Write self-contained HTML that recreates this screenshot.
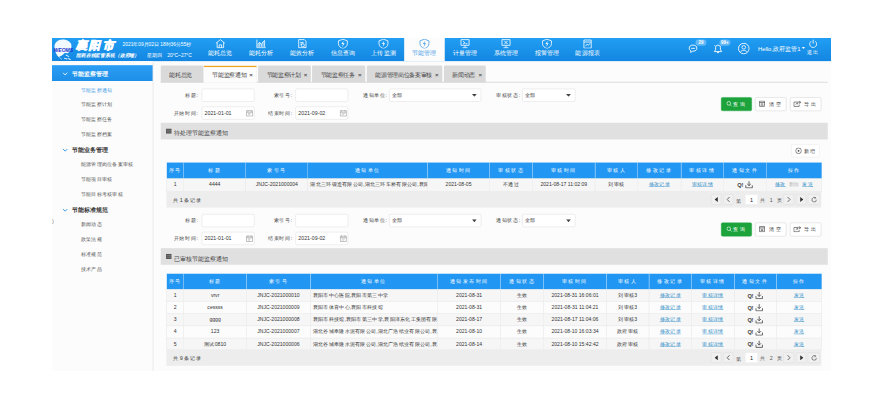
<!DOCTYPE html>
<html><head><meta charset="utf-8"><title>节能监察通知</title>
<style>
@font-face{font-family:"Liberation Sans CJK";src:local("Liberation Sans"),local("LiberationSans");unicode-range:U+3000-9FFF,U+FF00-FFEF;size-adjust:130%}
*{box-sizing:border-box;margin:0;padding:0}
html,body{width:872px;height:412px;overflow:hidden;background:#fff}
body{position:relative;font-family:"Liberation Sans CJK","Liberation Sans",sans-serif;color:#333}
#pg{position:absolute;left:52px;top:38px;width:1920px;height:821px;transform:scale(0.40573);transform-origin:0 0;background:#fcfcfc;overflow:hidden}
.a{position:absolute}
#hd{position:absolute;left:0;top:0;width:1920px;height:57px;background:linear-gradient(#219ef3,#1386e1);color:#fff}
.nav{position:absolute;top:0;height:57px;text-align:center;color:#fff;font-size:14px}
.nav svg{position:absolute;left:50%;margin-left:-16px;top:2px;width:32px;height:24px}
.nav span{position:absolute;left:0;right:0;top:27px;line-height:18px;letter-spacing:1px}
.nav.on{background:#fcfcfc;color:#4aa0e6}
#sb{position:absolute;left:0;top:57px;width:250px;height:764px;background:#fcfcfc;border-right:2px solid #e8e8e8}
.sbh{position:absolute;left:0;width:248px;height:39px;line-height:43px;font-size:15px;font-weight:bold;color:#333}
.sbh.on{background:linear-gradient(#2a9df4,#1e8fe8);color:#fff}
.sbh i{position:absolute;left:26px;top:0;font-style:normal;font-weight:normal;color:#2a96ee}
.sbh.on i{color:#fff}
.sbh b{position:absolute;left:49px}
.sbi{position:absolute;left:71px;font-size:13px;line-height:20px;color:#555}
.tab{position:absolute;top:68px;height:41px;background:#dadada;font-size:14px;line-height:45px;color:#444;text-align:left;padding-left:21px;border-radius:3px 3px 0 0}
.tab.on{background:#fcfcfc;border-top:4px solid #eea31c;line-height:37px;border-right:1px solid #e2e2e2}
.tab em{font-style:normal;position:absolute;right:9px;font-size:15px;color:#555;font-weight:bold}
.lbl{position:absolute;font-size:13.5px;color:#444;text-align:right;line-height:32px;height:32px}
.inp{position:absolute;height:32px;border:1px solid #d6d6d6;border-radius:4px;background:#fff;font-size:13px;line-height:30px;padding-left:6px;color:#333}
.btn{position:absolute;height:34px;border-radius:4px;font-size:13px;line-height:32px;text-align:center;border:1px solid #c9c9c9;background:#fff;color:#333;letter-spacing:4px}
.btn.g{background:#1ca33c;border-color:#1ca33c;color:#fff}
.sec{position:absolute;left:0;width:1644px;height:41px;background:#e0e0e0;font-size:15px;line-height:41px;color:#444;padding-left:13px}
table{position:absolute;border-collapse:collapse;table-layout:fixed;font-size:12.5px;color:#333}
th{background:#2196f3;color:#fff;font-weight:normal;font-size:13.5px;border-left:1px solid #cfe5fa;letter-spacing:2px;padding-top:2px}
td{border:1px solid #dedede;text-align:center;white-space:nowrap;overflow:hidden}
tr.s td{background:#f6f6f6}
td.l{text-align:left;padding-left:6px}
a{color:#3590c8;text-decoration:underline}
.pgbar{position:absolute;left:14px;width:1614px;height:41px;background:#ededed;font-size:13px;line-height:40px;color:#333}
.pb{position:absolute;top:9px;height:26px;border:1px solid #dadada;background:#f0f0f0;border-radius:2px}
</style></head><body>
<div id="pg">
<div id="hd">
<svg class="a" style="left:0px;top:0px;width:56px;height:56px" viewBox="0 0 56 56"><path d="M6 22 C6 12 14 4 26 4 C38 4 48 10 48 20 C48 28 44 34 38 38 C34 36 30 37 28 40 C24 44 20 46 16 46 C12 42 8 36 8 30 Z" fill="#fff" opacity=".95"/><path d="M14 40 C16 46 20 50 24 52" stroke="#fff" stroke-width="2" fill="none" opacity=".7"/><path d="M34 42 L42 46 M30 50 L38 52 M40 50 L46 54" stroke="#fff" stroke-width="2.5" fill="none" opacity=".85"/><text x="28" y="34" text-anchor="middle" font-size="12" font-weight="bold" font-style="italic" textLength="48" lengthAdjust="spacingAndGlyphs" fill="#2233cc" font-family="Liberation Sans">WEOMS</text></svg>
<div class="a" style="left:59px;top:0px;font-size:27px;font-weight:bold;font-style:italic;letter-spacing:6px;line-height:36px;-webkit-text-stroke:2.5px #fff;color:#fff">襄阳市</div>
<div class="a" style="left:174px;top:8px;font-size:12px;line-height:16px;color:#fff">2021年09月02日 18时36分55秒</div>
<div class="a" style="left:59px;top:34px;font-size:12px;line-height:16px;font-style:italic;font-weight:bold;color:#fff">能耗在线监管系统（政府端）</div>
<div class="a" style="left:235px;top:34px;font-size:12px;line-height:16px;color:#fff">星期四</div>
<div class="a" style="left:284px;top:34px;font-size:12px;line-height:16px;color:#fff">20°C~27°C</div>
  <div class="nav" style="left:364.5px;width:100.6px"><svg viewBox="0 0 32 24"><path d="M5 11 L16 2 L27 11 M8 9 V22 H24 V9 M13 22 V15 H19 V22" fill="none" stroke="currentColor" stroke-width="2"/></svg><span>能耗总览</span></div>
  <div class="nav" style="left:465.1px;width:100.6px"><svg viewBox="0 0 32 24"><path d="M6 2 V22 H28 M9 20 V12 M13 20 V9 M17 20 V14 M21 20 V8 M25 20 V4 M9 12 L13 9 L17 14 L21 8 L25 4" fill="none" stroke="currentColor" stroke-width="2"/></svg><span>能耗分析</span></div>
  <div class="nav" style="left:565.7px;width:100.6px"><svg viewBox="0 0 32 24"><path d="M8 2 H22 L26 6 V22 H8 Z M12 9 H20 M12 13 H17" fill="none" stroke="currentColor" stroke-width="2"/><circle cx="18" cy="16" r="4" fill="none" stroke="currentColor" stroke-width="2"/><path d="M21 19 L25 23" stroke="currentColor" stroke-width="2"/></svg><span>能效分析</span></div>
  <div class="nav" style="left:666.3px;width:100.6px"><svg viewBox="0 0 32 24"><path d="M16 1 L27 5 V12 C27 18 22 22 16 24 C10 22 5 18 5 12 V5 Z" fill="none" stroke="currentColor" stroke-width="2"/><path d="M18 5 L12 13 H16 L14 20 L20 11 H16 Z" fill="currentColor"/></svg><span>信息查询</span></div>
  <div class="nav" style="left:766.9px;width:100.6px"><svg viewBox="0 0 32 24"><path d="M16 1 L27 5 V12 C27 18 22 22 16 24 C10 22 5 18 5 12 V5 Z" fill="none" stroke="currentColor" stroke-width="2"/><path d="M18 5 L12 13 H16 L14 20 L20 11 H16 Z" fill="currentColor"/></svg><span>上传监测</span></div>
  <div class="nav on" style="left:867.5px;width:100.6px"><svg viewBox="0 0 32 24"><path d="M16 1 L27 5 V12 C27 18 22 22 16 24 C10 22 5 18 5 12 V5 Z" fill="none" stroke="currentColor" stroke-width="2"/><path d="M18 5 L12 13 H16 L14 20 L20 11 H16 Z" fill="currentColor"/></svg><span>节能管理</span></div>
  <div class="nav" style="left:968.1px;width:100.6px"><svg viewBox="0 0 32 24"><path d="M6 2 H26 V16 H6 Z M16 16 V21 M10 22 H22 M11 6 L16 10 L11 13 M17 12 H22" fill="none" stroke="currentColor" stroke-width="2"/></svg><span>计量管理</span></div>
  <div class="nav" style="left:1068.7px;width:100.6px"><svg viewBox="0 0 32 24"><path d="M6 2 H26 V16 H6 Z M16 16 V21 M10 22 H22 M12 5 L20 13 M20 5 L12 13" fill="none" stroke="currentColor" stroke-width="2"/></svg><span>系统管理</span></div>
  <div class="nav" style="left:1169.3px;width:100.6px"><svg viewBox="0 0 32 24"><path d="M16 1 L27 5 V12 C27 18 22 22 16 24 C10 22 5 18 5 12 V5 Z" fill="none" stroke="currentColor" stroke-width="2"/><path d="M18 5 L12 13 H16 L14 20 L20 11 H16 Z" fill="currentColor"/></svg><span>报警管理</span></div>
  <div class="nav" style="left:1269.9px;width:100.6px"><svg viewBox="0 0 32 24"><path d="M7 3 H25 V23 H7 Z M7 8 H25 M11 18 L15 13 L18 16 L22 11" fill="none" stroke="currentColor" stroke-width="2"/></svg><span>能源报表</span></div>
<svg class="a" style="left:1568px;top:12px;width:28px;height:28px" viewBox="0 0 28 28"><path d="M12 5.5 C18 5.5 21.5 8.5 21.5 13 C21.5 17.5 18 20.5 12 20.5 L10 20.5 L6.5 24 L6.5 19.5 C3.5 18.5 2.5 16 2.5 13 C2.5 8.5 6 5.5 12 5.5 Z" fill="none" stroke="#fff" stroke-width="2.2"/><path d="M7 13.5 H17" stroke="#fff" stroke-width="2"/></svg>
<div class="a" style="left:1586px;top:4px;width:27px;height:15px;border-radius:8px;background:#62b8f6;color:#fff;font-size:11px;font-weight:bold;line-height:15px;text-align:center">29</div>
<svg class="a" style="left:1630px;top:12px;width:26px;height:28px" viewBox="0 0 26 28"><path d="M2.5 21.5 H20.5 L17.5 17 V11.5 C17.5 8 15 5.5 11.5 5.5 C8 5.5 5.5 8 5.5 11.5 V17 Z" fill="none" stroke="#fff" stroke-width="2.2"/><path d="M9 24 H14" stroke="#fff" stroke-width="2.2"/><path d="M3 6 L6 9 M20 6 L17 9" stroke="#fff" stroke-width="2"/></svg>
<div class="a" style="left:1645px;top:4px;width:27px;height:15px;border-radius:8px;background:#62b8f6;color:#fff;font-size:11px;font-weight:bold;line-height:15px;text-align:center">99+</div>
<svg class="a" style="left:1690px;top:11px;width:30px;height:30px" viewBox="0 0 30 30"><circle cx="15" cy="15" r="13" fill="none" stroke="#fff" stroke-width="2.2"/><circle cx="15" cy="12" r="4.5" fill="none" stroke="#fff" stroke-width="2"/><path d="M7 24 C9 18 21 18 23 24" fill="none" stroke="#fff" stroke-width="2"/></svg>
<div class="a" style="left:1740px;top:16px;font-size:14.5px;line-height:20px;color:#fff">Hello,政府监管1</div>
<svg class="a" style="left:1848px;top:22px;width:8px;height:6px" viewBox="0 0 8 6"><path d="M0 0 H8 L4 5 Z" fill="#fff"/></svg>
<svg class="a" style="left:1864px;top:3px;width:24px;height:22px" viewBox="0 0 24 22"><path d="M7 5 A8.5 8.5 0 1 0 17 5" fill="none" stroke="#fff" stroke-width="2"/><path d="M12 1 V11" stroke="#fff" stroke-width="2"/></svg>
<div class="a" style="left:1860px;top:28px;font-size:13px;line-height:16px;color:#fff;letter-spacing:3px">退出</div>
</div>
<div id="sb">
<div class="sbh on" style="top:10px"><i><svg style="width:13px;height:9px;vertical-align:1px" viewBox="0 0 13 9"><path d="M1 1.5 L6.5 7 L12 1.5" fill="none" stroke="currentColor" stroke-width="2.2"/></svg></i><b>节能监察管理</b></div>
<div class="sbi" style="top:60.5px; color:#4aa0e6;">节能监察通知</div>
<div class="sbi" style="top:97.3px;">节能监察计划</div>
<div class="sbi" style="top:134.2px;">节能监察任务</div>
<div class="sbi" style="top:171.1px;">节能监察档案</div>
<div class="sbh" style="top:198.4px"><i><svg style="width:13px;height:9px;vertical-align:1px" viewBox="0 0 13 9"><path d="M1 1.5 L6.5 7 L12 1.5" fill="none" stroke="currentColor" stroke-width="2.2"/></svg></i><b>节能业务管理</b></div>
<div class="sbi" style="top:244.8px;">能源管理岗位备案审核</div>
<div class="sbi" style="top:281.6px;">节能项目审核</div>
<div class="sbi" style="top:318.4px;">节能目标考核审核</div>
<div class="sbh" style="top:345.8px"><i><svg style="width:13px;height:9px;vertical-align:1px" viewBox="0 0 13 9"><path d="M1 1.5 L6.5 7 L12 1.5" fill="none" stroke="currentColor" stroke-width="2.2"/></svg></i><b>节能标准规范</b></div>
<div class="sbi" style="top:392.2px;">新闻动态</div>
<div class="sbi" style="top:429.0px;">政策法规</div>
<div class="sbi" style="top:465.9px;">标准规范</div>
<div class="sbi" style="top:502.7px;">技术产品</div>
<div class="a" style="left:0;top:383px;font-size:14px;line-height:20px;color:#888">)</div>
</div>
<div class="a" style="left:268px;top:0;width:1652px;height:821px">
<div class="tab" style="left:0px;width:106px">能耗总览</div>
<div class="tab on" style="left:106px;width:131px">节能监察通知<em>×</em></div>
<div class="tab" style="left:240px;width:130px">节能监察计划<em>×</em></div>
<div class="tab" style="left:373px;width:131px">节能监察任务<em>×</em></div>
<div class="tab" style="left:508px;width:186px">能源管理岗位备案审核<em>×</em></div>
<div class="tab" style="left:698px;width:103px">新闻动态<em>×</em></div>
<div class="a" style="left:0;top:108px;width:1644px;height:2px;background:#d4d4d4"></div>
<div class="tab on" style="left:106px;width:131px;height:42px">节能监察通知<em>×</em></div>
<div class="lbl" style="left:0;width:92px;top:125px">标题:</div>
<div class="inp" style="left:101px;width:130px;top:125px"></div>
<div class="lbl" style="left:200px;width:124px;top:125px">索引号:</div>
<div class="inp" style="left:332px;width:130px;top:125px"></div>
<div class="lbl" style="left:450px;width:108px;top:125px">通知单位:</div>
<div class="inp" style="left:563px;width:227px;top:125px">全部<svg class="a" style="right:10px;top:12px;width:12px;height:7px" viewBox="0 0 12 7"><path d="M0 0 H12 L6 7 Z" fill="#444"/></svg></div>
<div class="lbl" style="left:780px;width:106px;top:125px">审核状态:</div>
<div class="inp" style="left:891px;width:131px;top:125px">全部<svg class="a" style="right:10px;top:12px;width:12px;height:7px" viewBox="0 0 12 7"><path d="M0 0 H12 L6 7 Z" fill="#444"/></svg></div>
<div class="lbl" style="left:0;width:92px;top:169px">开始时间:</div>
<div class="inp" style="left:101px;width:130px;top:169px">2021-01-01<svg class="a" style="right:2px;top:6px;width:18px;height:18px" viewBox="0 0 18 18"><path d="M1.5 3.5 H16.5 V16.5 H1.5 Z M1.5 7 H16.5 M5 1 V4.5 M13 1 V4.5 M5 10 H7 M8 10 H10 M11 10 H13 M5 13 H7 M8 13 H10" fill="none" stroke="#888" stroke-width="1.3"/></svg></div>
<div class="lbl" style="left:200px;width:124px;top:169px">结束时间:</div>
<div class="inp" style="left:332px;width:130px;top:169px">2021-09-02<svg class="a" style="right:2px;top:6px;width:18px;height:18px" viewBox="0 0 18 18"><path d="M1.5 3.5 H16.5 V16.5 H1.5 Z M1.5 7 H16.5 M5 1 V4.5 M13 1 V4.5 M5 10 H7 M8 10 H10 M11 10 H13 M5 13 H7 M8 13 H10" fill="none" stroke="#888" stroke-width="1.3"/></svg></div>
<div class="btn g" style="left:1381px;width:76px;top:146px"><svg style="width:14px;height:14px;vertical-align:-2px;margin-right:3px" viewBox="0 0 14 14"><circle cx="6" cy="6" r="4.5" fill="none" stroke="#fff" stroke-width="1.6"/><path d="M9.5 9.5 L13 13" stroke="#fff" stroke-width="1.6"/></svg>查询</div>
<div class="btn" style="left:1465px;width:77px;top:146px"><svg style="width:16px;height:16px;vertical-align:-3px;margin-right:9px" viewBox="0 0 16 16"><path d="M2 1.5 H14 V14.5 H2 Z M2 5 H14 M5 8.5 H11 M5 11.5 H11" fill="none" stroke="#444" stroke-width="1.6"/></svg>清空</div>
<div class="btn" style="left:1551px;width:77px;top:146px"><svg style="width:20px;height:16px;vertical-align:-3px;margin-right:7px" viewBox="0 0 20 16"><path d="M12 4 H1.5 V14.5 H14.5 V10 M6 9.5 L13 4.5 M9 8 H12 M15 2 L19 4.5 L15 7 Z" fill="none" stroke="#444" stroke-width="1.6"/></svg>导出</div>
<div class="sec" style="top:209px"><svg style="width:14px;height:13px;vertical-align:-1px;margin-right:5px" viewBox="0 0 14 13"><path d="M0 0 H14 V13 H0 Z" fill="#555"/><path d="M1.5 4.5 H12.5 M1.5 8.5 H12.5" stroke="#aaa" stroke-width="1"/></svg><span style="position:relative;top:5px">待处理节能监察通知</span></div>
<div class="btn" style="left:1554px;width:70px;top:262px;height:32px;line-height:31px;letter-spacing:1px;border-color:#e6e6e6"><svg style="width:16px;height:16px;vertical-align:-3px;margin-right:6px" viewBox="0 0 16 16"><circle cx="8" cy="8" r="7" fill="none" stroke="#444" stroke-width="1.6"/><circle cx="8" cy="8" r="2.2" fill="#444"/></svg>新增</div>
<table style="left:14px;top:307px;width:1614px">
<colgroup><col style="width:42px"><col style="width:153px"><col style="width:153px"><col style="width:295px"><col style="width:153px"><col style="width:106px"><col style="width:154px"><col style="width:105px"><col style="width:107px"><col style="width:105px"><col style="width:106px"><col style="width:135px"></colgroup>
<tr style="height:39px"><th>序号</th><th>标题</th><th>索引号</th><th>通知单位</th><th>通知时间</th><th>审核状态</th><th>审核时间</th><th>审核人</th><th>修改记录</th><th>审核详情</th><th>通知文件</th><th>操作</th></tr>
<tr class="s" style="height:31px"><td>1</td><td>4444</td><td>JNJC-2021000004</td><td class="l">湖北三环锻造有限公司,湖北三环车桥有限公司,襄阳...</td><td>2021-08-05</td><td>不通过</td><td>2021-08-17 11:02:09</td><td>刘审核</td><td><a>修改记录</a></td><td><a>审核详情</a></td><td><span style="display:inline-block;font-size:14px;font-weight:bold;color:#444;letter-spacing:-1px">Q!</span><svg style="width:20px;height:19px;vertical-align:-4px;margin-left:5px" viewBox="0 0 20 19"><path d="M10 1 V12 M5.5 7.5 L10 12 L14.5 7.5 M2 11 V17.5 H18 V11" fill="none" stroke="#444" stroke-width="2"/></svg></td><td><a>修改</a> <span style="color:#bbb;margin:0 4px">删除</span> <a>发送</a></td></tr>
</table>
<div class="pgbar" style="top:377px"><span style="margin-left:15px;letter-spacing:0px;font-size:13.5px;position:relative;top:3px">共 1 条记录</span></div>
<div class="pb" style="left:1356px;width:26px;top:385px"><svg style="position:absolute;left:8px;top:6px;width:9px;height:12px" viewBox="0 0 9 12"><path d="M8 0 V12 L0 6 Z" fill="#333"/></svg></div>
<div class="pb" style="left:1387px;width:24px;top:385px"><svg style="position:absolute;left:6px;top:5px;width:10px;height:14px" viewBox="0 0 10 14"><path d="M8 1 L2 7 L8 13" fill="none" stroke="#444" stroke-width="2"/></svg></div>
<div class="a" style="left:1419px;top:382px;line-height:40px;font-size:13px;color:#555">第</div>
<div class="a" style="left:1440px;top:385px;width:32px;height:26px;background:#fff;border:1px solid #e2e2e2;text-align:center;line-height:25px;font-size:13.5px;color:#222">1</div>
<div class="a" style="left:1478px;top:380px;line-height:40px;font-size:13px;color:#555;letter-spacing:3.3px">共 1 页</div>
<div class="pb" style="left:1535px;width:26px;top:385px"><svg style="position:absolute;left:7px;top:5px;width:10px;height:14px" viewBox="0 0 10 14"><path d="M2 1 L8 7 L2 13" fill="none" stroke="#444" stroke-width="2"/></svg></div>
<div class="pb" style="left:1566px;width:25px;top:385px"><svg style="position:absolute;left:8px;top:6px;width:9px;height:12px" viewBox="0 0 9 12"><path d="M1 0 V12 L9 6 Z" fill="#333"/></svg></div>
<div class="pb" style="left:1595px;width:30px;top:385px"><svg style="position:absolute;left:6px;top:4px;width:17px;height:17px" viewBox="0 0 17 17"><path d="M14 8.5 A5.5 5.5 0 1 1 11.5 4 M10 1.5 L12.5 4.2 L9.5 6" fill="none" stroke="#444" stroke-width="1.5"/></svg></div>
<div class="lbl" style="left:0;width:92px;top:434px">标题:</div>
<div class="inp" style="left:101px;width:130px;top:434px"></div>
<div class="lbl" style="left:200px;width:124px;top:434px">索引号:</div>
<div class="inp" style="left:332px;width:130px;top:434px"></div>
<div class="lbl" style="left:450px;width:108px;top:434px">通知单位:</div>
<div class="inp" style="left:563px;width:227px;top:434px">全部<svg class="a" style="right:10px;top:12px;width:12px;height:7px" viewBox="0 0 12 7"><path d="M0 0 H12 L6 7 Z" fill="#444"/></svg></div>
<div class="lbl" style="left:780px;width:106px;top:434px">通知状态:</div>
<div class="inp" style="left:891px;width:131px;top:434px">全部<svg class="a" style="right:10px;top:12px;width:12px;height:7px" viewBox="0 0 12 7"><path d="M0 0 H12 L6 7 Z" fill="#444"/></svg></div>
<div class="lbl" style="left:0;width:92px;top:478px">开始时间:</div>
<div class="inp" style="left:101px;width:130px;top:478px">2021-01-01<svg class="a" style="right:2px;top:6px;width:18px;height:18px" viewBox="0 0 18 18"><path d="M1.5 3.5 H16.5 V16.5 H1.5 Z M1.5 7 H16.5 M5 1 V4.5 M13 1 V4.5 M5 10 H7 M8 10 H10 M11 10 H13 M5 13 H7 M8 13 H10" fill="none" stroke="#888" stroke-width="1.3"/></svg></div>
<div class="lbl" style="left:200px;width:124px;top:478px">结束时间:</div>
<div class="inp" style="left:332px;width:130px;top:478px">2021-09-02<svg class="a" style="right:2px;top:6px;width:18px;height:18px" viewBox="0 0 18 18"><path d="M1.5 3.5 H16.5 V16.5 H1.5 Z M1.5 7 H16.5 M5 1 V4.5 M13 1 V4.5 M5 10 H7 M8 10 H10 M11 10 H13 M5 13 H7 M8 13 H10" fill="none" stroke="#888" stroke-width="1.3"/></svg></div>
<div class="btn g" style="left:1381px;width:76px;top:455px"><svg style="width:14px;height:14px;vertical-align:-2px;margin-right:3px" viewBox="0 0 14 14"><circle cx="6" cy="6" r="4.5" fill="none" stroke="#fff" stroke-width="1.6"/><path d="M9.5 9.5 L13 13" stroke="#fff" stroke-width="1.6"/></svg>查询</div>
<div class="btn" style="left:1465px;width:77px;top:455px"><svg style="width:16px;height:16px;vertical-align:-3px;margin-right:9px" viewBox="0 0 16 16"><path d="M2 1.5 H14 V14.5 H2 Z M2 5 H14 M5 8.5 H11 M5 11.5 H11" fill="none" stroke="#444" stroke-width="1.6"/></svg>清空</div>
<div class="btn" style="left:1551px;width:77px;top:455px"><svg style="width:20px;height:16px;vertical-align:-3px;margin-right:7px" viewBox="0 0 20 16"><path d="M12 4 H1.5 V14.5 H14.5 V10 M6 9.5 L13 4.5 M9 8 H12 M15 2 L19 4.5 L15 7 Z" fill="none" stroke="#444" stroke-width="1.6"/></svg>导出</div>
<div class="sec" style="top:518px"><svg style="width:14px;height:13px;vertical-align:-1px;margin-right:5px" viewBox="0 0 14 13"><path d="M0 0 H14 V13 H0 Z" fill="#555"/><path d="M1.5 4.5 H12.5 M1.5 8.5 H12.5" stroke="#aaa" stroke-width="1"/></svg><span style="position:relative;top:5px">已审核节能监察通知</span></div>
<table style="left:14px;top:581px;width:1614px">
<colgroup><col style="width:42px"><col style="width:155px"><col style="width:157px"><col style="width:314px"><col style="width:155px"><col style="width:106px"><col style="width:155px"><col style="width:105px"><col style="width:105px"><col style="width:105px"><col style="width:104px"><col style="width:111px"></colgroup>
<tr style="height:38px"><th>序号</th><th>标题</th><th>索引号</th><th>通知单位</th><th>通知发布时间</th><th>通知状态</th><th>审核时间</th><th>审核人</th><th>修改记录</th><th>审核详情</th><th>通知文件</th><th>操作</th></tr>
<tr class="s" style="height:30px"><td>1</td><td>vrvr</td><td>JNJC-2021000010</td><td class="l">襄阳市中心医院,襄阳市第三中学</td><td>2021-08-31</td><td>生效</td><td>2021-08-31 16:06:01</td><td>刘审核3</td><td><a>修改记录</a></td><td><a>审核详情</a></td><td><span style="display:inline-block;font-size:14px;font-weight:bold;color:#444;letter-spacing:-1px">Q!</span><svg style="width:20px;height:19px;vertical-align:-4px;margin-left:5px" viewBox="0 0 20 19"><path d="M10 1 V12 M5.5 7.5 L10 12 L14.5 7.5 M2 11 V17.5 H18 V11" fill="none" stroke="#444" stroke-width="2"/></svg></td><td><a>发送</a></td></tr>
<tr style="height:30px"><td>2</td><td>cessss</td><td>JNJC-2021000009</td><td class="l">襄阳市体育中心,襄阳市科技馆</td><td>2021-08-31</td><td>生效</td><td>2021-08-31 11:04:21</td><td>刘审核3</td><td><a>修改记录</a></td><td><a>审核详情</a></td><td><span style="display:inline-block;font-size:14px;font-weight:bold;color:#444;letter-spacing:-1px">Q!</span><svg style="width:20px;height:19px;vertical-align:-4px;margin-left:5px" viewBox="0 0 20 19"><path d="M10 1 V12 M5.5 7.5 L10 12 L14.5 7.5 M2 11 V17.5 H18 V11" fill="none" stroke="#444" stroke-width="2"/></svg></td><td><a>发送</a></td></tr>
<tr class="s" style="height:30px"><td>3</td><td>gggg</td><td>JNJC-2021000008</td><td class="l">襄阳市科技馆,襄阳市第三中学,襄阳泽东化工集团有限...</td><td>2021-08-17</td><td>生效</td><td>2021-08-17 11:04:06</td><td>刘审核3</td><td><a>修改记录</a></td><td><a>审核详情</a></td><td><span style="display:inline-block;font-size:14px;font-weight:bold;color:#444;letter-spacing:-1px">Q!</span><svg style="width:20px;height:19px;vertical-align:-4px;margin-left:5px" viewBox="0 0 20 19"><path d="M10 1 V12 M5.5 7.5 L10 12 L14.5 7.5 M2 11 V17.5 H18 V11" fill="none" stroke="#444" stroke-width="2"/></svg></td><td><a>发送</a></td></tr>
<tr style="height:30px"><td>4</td><td>123</td><td>JNJC-2021000007</td><td class="l">湖北谷城奉隆水泥有限公司,湖北广浩纸业有限公司,襄...</td><td>2021-08-10</td><td>生效</td><td>2021-08-10 16:03:34</td><td>政府审核</td><td><a>修改记录</a></td><td><a>审核详情</a></td><td><span style="display:inline-block;font-size:14px;font-weight:bold;color:#444;letter-spacing:-1px">Q!</span><svg style="width:20px;height:19px;vertical-align:-4px;margin-left:5px" viewBox="0 0 20 19"><path d="M10 1 V12 M5.5 7.5 L10 12 L14.5 7.5 M2 11 V17.5 H18 V11" fill="none" stroke="#444" stroke-width="2"/></svg></td><td><a>发送</a></td></tr>
<tr class="s" style="height:30px"><td>5</td><td>测试0810</td><td>JNJC-2021000006</td><td class="l">湖北谷城奉隆水泥有限公司,湖北广浩纸业有限公司,襄...</td><td>2021-08-14</td><td>生效</td><td>2021-08-10 15:42:42</td><td>政府审核</td><td><a>修改记录</a></td><td><a>审核详情</a></td><td><span style="display:inline-block;font-size:14px;font-weight:bold;color:#444;letter-spacing:-1px">Q!</span><svg style="width:20px;height:19px;vertical-align:-4px;margin-left:5px" viewBox="0 0 20 19"><path d="M10 1 V12 M5.5 7.5 L10 12 L14.5 7.5 M2 11 V17.5 H18 V11" fill="none" stroke="#444" stroke-width="2"/></svg></td><td><a>发送</a></td></tr>
</table>
<div class="pgbar" style="top:767px"><span style="margin-left:15px;letter-spacing:0px;font-size:13.5px;position:relative;top:3px">共 9 条记录</span></div>
<div class="pb" style="left:1356px;width:26px;top:775px"><svg style="position:absolute;left:8px;top:6px;width:9px;height:12px" viewBox="0 0 9 12"><path d="M8 0 V12 L0 6 Z" fill="#333"/></svg></div>
<div class="pb" style="left:1387px;width:24px;top:775px"><svg style="position:absolute;left:6px;top:5px;width:10px;height:14px" viewBox="0 0 10 14"><path d="M8 1 L2 7 L8 13" fill="none" stroke="#444" stroke-width="2"/></svg></div>
<div class="a" style="left:1419px;top:772px;line-height:40px;font-size:13px;color:#555">第</div>
<div class="a" style="left:1440px;top:775px;width:32px;height:26px;background:#fff;border:1px solid #e2e2e2;text-align:center;line-height:25px;font-size:13.5px;color:#222">1</div>
<div class="a" style="left:1478px;top:770px;line-height:40px;font-size:13px;color:#555;letter-spacing:3.3px">共 2 页</div>
<div class="pb" style="left:1535px;width:26px;top:775px"><svg style="position:absolute;left:7px;top:5px;width:10px;height:14px" viewBox="0 0 10 14"><path d="M2 1 L8 7 L2 13" fill="none" stroke="#444" stroke-width="2"/></svg></div>
<div class="pb" style="left:1566px;width:25px;top:775px"><svg style="position:absolute;left:8px;top:6px;width:9px;height:12px" viewBox="0 0 9 12"><path d="M1 0 V12 L9 6 Z" fill="#333"/></svg></div>
<div class="pb" style="left:1595px;width:30px;top:775px"><svg style="position:absolute;left:6px;top:4px;width:17px;height:17px" viewBox="0 0 17 17"><path d="M14 8.5 A5.5 5.5 0 1 1 11.5 4 M10 1.5 L12.5 4.2 L9.5 6" fill="none" stroke="#444" stroke-width="1.5"/></svg></div>
</div>
</div>
</body></html>
